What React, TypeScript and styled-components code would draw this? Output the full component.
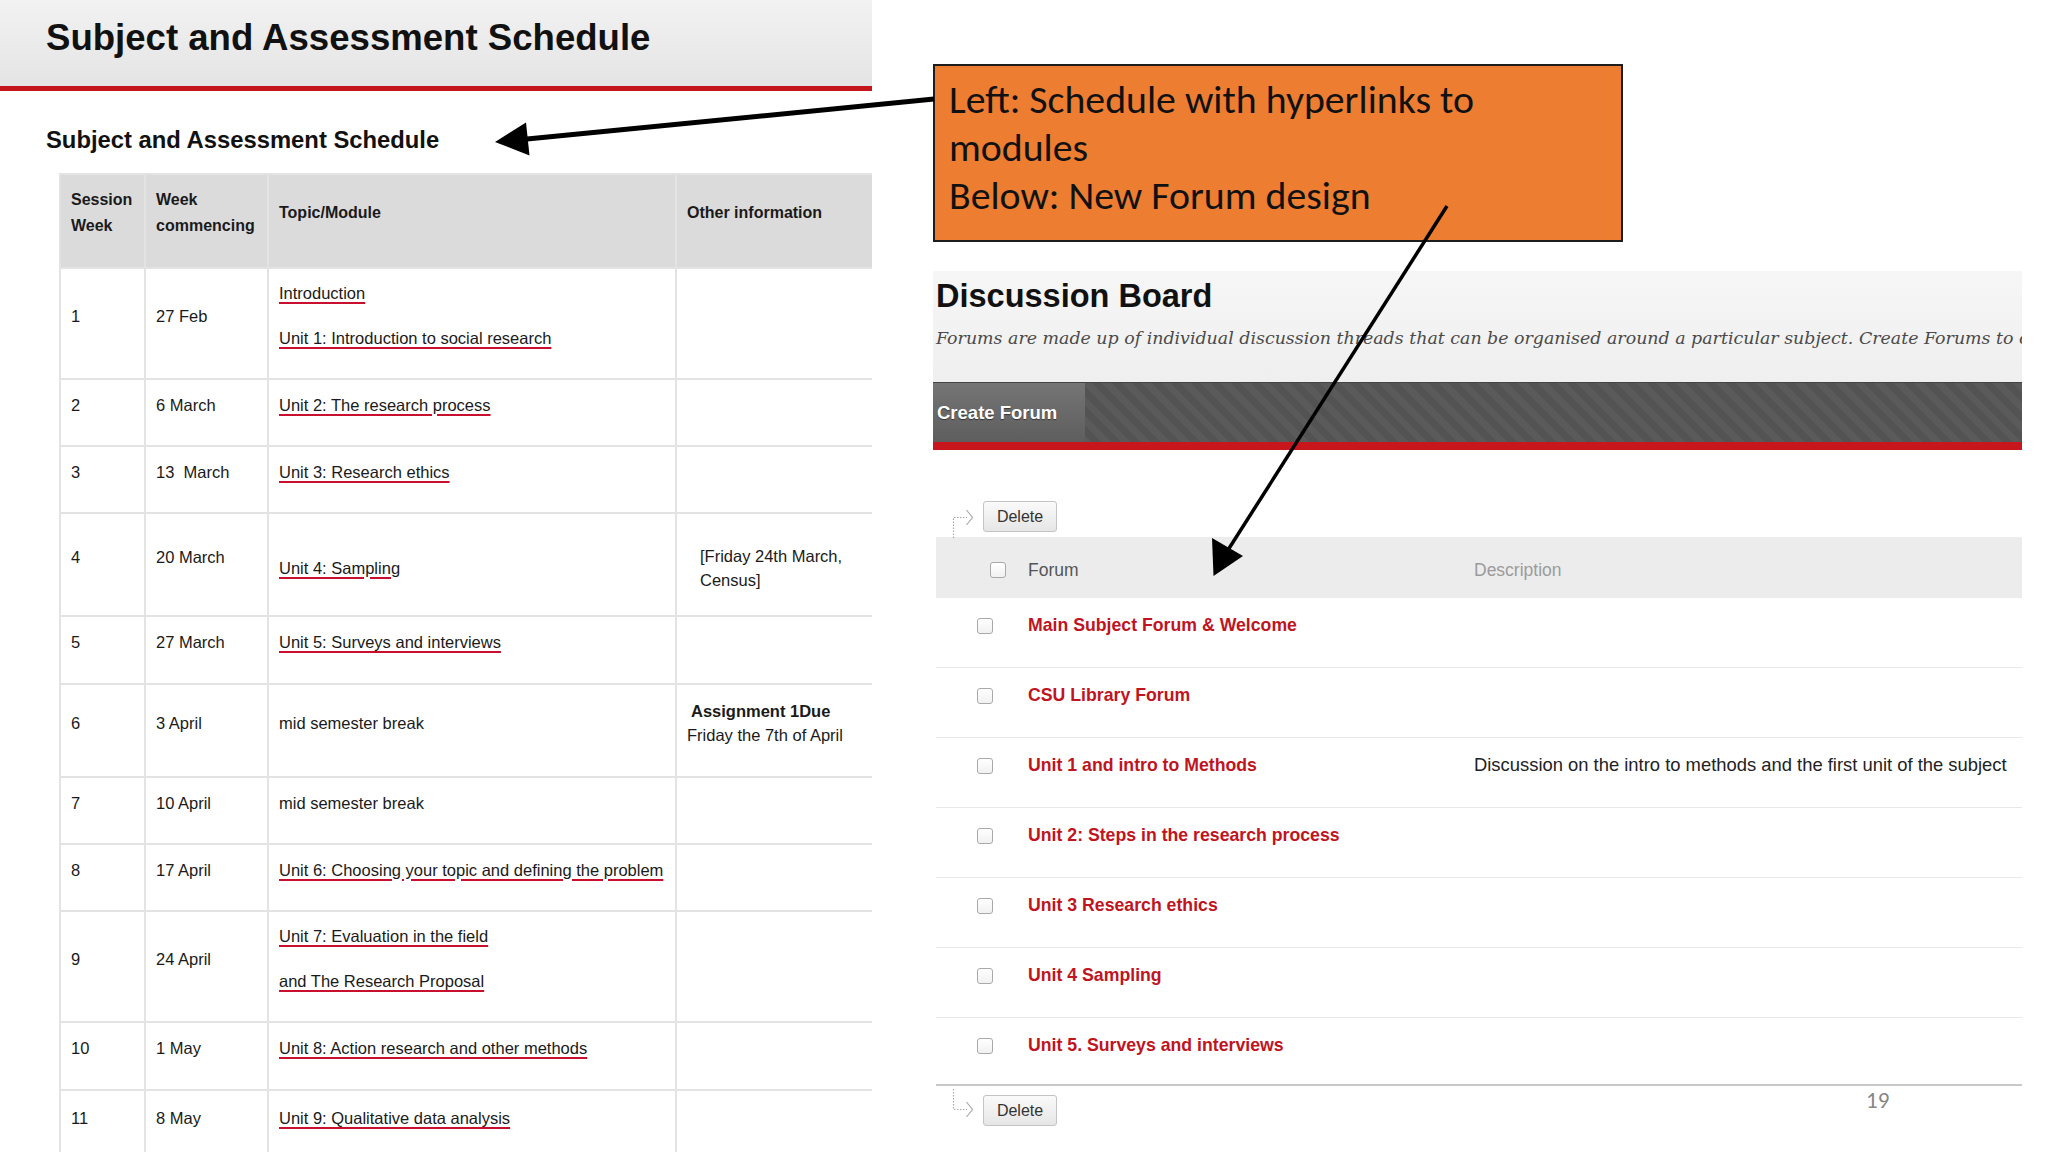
import React from 'react';
import styled, { createGlobalStyle } from 'styled-components';

const GlobalStyle = createGlobalStyle`
  html, body { margin: 0; padding: 0; background: #fff; }
  body { font-family: "Liberation Sans", Arial, sans-serif; color: #1a1a1a; }
  * { box-sizing: border-box; }
`;

const Page = styled.div`
  position: relative;
  width: 2048px;
  height: 1152px;
  overflow: hidden;
  background: #fff;
  display: flex;
  align-items: flex-start;
`;

/* ---------- Left: schedule ---------- */

const LeftPanel = styled.section`
  width: 872px;
  height: 1152px;
  flex-shrink: 0;
  overflow: hidden;
`;

const TitleBand = styled.header`
  height: 91px;
  padding: 17px 0 0 46px;
  background: linear-gradient(#f2f2f2, #e4e4e4);
  border-bottom: 5px solid #c4161c;
`;

const PageTitle = styled.h1`
  margin: 0;
  font-size: 36.6px;
  line-height: normal;
  font-weight: 700;
  color: #111;
`;

const SectionTitle = styled.h2`
  margin: 35px 0 0 46px;
  font-size: 23.8px;
  line-height: normal;
  font-weight: 700;
  color: #111;
`;

const ScheduleGrid = styled.div`
  display: grid;
  grid-template-columns: 83px 121px 406px 320px;
  grid-template-rows: 92px 109px 65px 65px 101px 66px 91px 65px 65px 109px 66px 70px;
  gap: 2px;
  padding: 2px;
  width: max-content;
  margin: 19px 0 0 59px;
  background: #e3e3e3;
`;

const Cell = styled.div<{ $head?: boolean; $mid?: boolean; $indent?: number }>`
  display: flex;
  flex-direction: column;
  justify-content: center;
  gap: 25px;
  padding: ${p => (p.$mid ? '6px' : '0')} 8px ${p => (p.$head ? '17px' : p.$mid ? '0' : '16px')}
    ${p => 10 + (p.$indent ?? 0)}px;
  background: ${p => (p.$head ? '#dcdbdc' : '#fff')};
  font-size: ${p => (p.$head ? '16px' : '16.5px')};
  font-weight: ${p => (p.$head ? 700 : 400)};
  line-height: ${p => (p.$head ? '26px' : '20px')};
  color: #1a1a1a;
  white-space: nowrap;
`;

const TopicLink = styled.a`
  color: #1a1a1a;
  text-decoration: underline;
  text-decoration-color: #c8102e;
  text-decoration-thickness: 2px;
  text-underline-offset: 3px;
  cursor: pointer;
`;

const Note = styled.div`
  line-height: 24px;
`;

const NoteStrong = styled.div<{ $indent?: number }>`
  font-weight: 700;
  padding-left: ${p => p.$indent ?? 0}px;
`;

/* ---------- Right: callout + discussion board ---------- */

const RightColumn = styled.section`
  margin-left: 61px;
  width: 1089px;
  padding-top: 64px;
  display: flex;
  flex-direction: column;
`;

const Callout = styled.div`
  width: 690px;
  height: 178px;
  padding: 10px 14px 0 14px;
  background: #ed7d31;
  border: 2px solid #1d1d1d;
  font-family: Carlito, Lato, "Open Sans", sans-serif;
  font-size: 39.8px;
  line-height: 48px;
  color: #111;
  white-space: nowrap;
`;

const Board = styled.div`
  margin-top: 29px;
  width: 1089px;
`;

const BoardHead = styled.div`
  height: 111px;
  padding: 6px 0 0 3px;
  background: linear-gradient(#f6f6f6, #efefef);
  overflow: hidden;
`;

const BoardTitle = styled.h2`
  margin: 0;
  font-size: 32.5px;
  line-height: 38px;
  font-weight: 700;
  color: #111;
`;

const BoardIntro = styled.p`
  margin: 11px 0 0;
  font-family: "DejaVu Serif", Georgia, serif;
  font-style: italic;
  font-size: 17.4px;
  line-height: 24px;
  color: #4a4a4a;
  white-space: nowrap;
`;

const Toolbar = styled.div`
  height: 68px;
  display: flex;
  background: repeating-linear-gradient(45deg, #535353 0 7px, #5a5a5a 7px 14px);
  border-top: 1px solid #444;
  border-bottom: 8px solid #c8161d;
`;

const CreateButton = styled.button`
  width: 152px;
  height: 100%;
  padding: 0 0 0 4px;
  border: none;
  background: linear-gradient(#757575, #5e5e5e);
  color: #fff;
  font-family: "Liberation Sans", Arial, sans-serif;
  font-size: 18.5px;
  font-weight: 700;
  text-align: left;
  text-shadow: 0 1px 1px rgba(0, 0, 0, 0.5);
  cursor: pointer;
`;

const ListArea = styled.div`
  padding-left: 3px;
`;

const ActionBar = styled.div<{ $top?: boolean }>`
  display: flex;
  align-items: flex-start;
  gap: 9px;
  height: ${p => (p.$top ? '36px' : '40px')};
  margin-top: ${p => (p.$top ? '51px' : '2px')};
  padding-left: 14px;
`;

const SelectArrow = styled.svg<{ $offset: number }>`
  width: 24px;
  height: 32px;
  margin-top: ${p => p.$offset}px;
  flex-shrink: 0;
`;

const DeleteButton = styled.button<{ $offset: number }>`
  margin-top: ${p => p.$offset}px;
  width: 74px;
  height: 31px;
  padding: 0;
  border: 1px solid #c4c4c4;
  border-radius: 3px;
  background: linear-gradient(#fafafa, #e6e6e6);
  color: #333;
  font-family: "Liberation Sans", Arial, sans-serif;
  font-size: 16px;
  cursor: pointer;
`;

const ForumRow = styled.div<{ $head?: boolean; $last?: boolean }>`
  display: grid;
  grid-template-columns: 92px 446px 1fr;
  align-items: ${p => (p.$head ? 'center' : 'start')};
  height: ${p => (p.$head ? '61px' : p.$last ? '66px' : '70px')};
  padding-top: ${p => (p.$head ? '5px' : '16px')};
  background: ${p => (p.$head ? '#ececec' : '#fff')};
  border-bottom: ${p => (p.$head || p.$last ? 'none' : '1px solid #e8e8e8')};
  font-size: 18.4px;
  line-height: 22px;
`;

const CheckCell = styled.div<{ $head?: boolean }>`
  padding-left: ${p => (p.$head ? '54px' : '41px')};
  padding-top: ${p => (p.$head ? '0' : '4px')};
  display: flex;
`;

const CheckBox = styled.span`
  display: block;
  width: 16px;
  height: 16px;
  border: 1px solid #a9a9a9;
  border-radius: 3px;
  background: linear-gradient(#ffffff, #f1f1f1);
`;

const HeadLabel = styled.span<{ $muted?: boolean }>`
  color: ${p => (p.$muted ? '#9b9b9b' : '#555')};
  font-size: 17.5px;
`;

const ForumName = styled.a`
  color: #c0141e;
  font-weight: 700;
  font-size: 17.7px;
  text-decoration: none;
  cursor: pointer;
  white-space: nowrap;
`;

const ForumDesc = styled.span`
  color: #222;
  white-space: nowrap;
`;

const BottomRule = styled.div`
  height: 2px;
  background: #c8c8c8;
`;

const SlideNumber = styled.div`
  position: absolute;
  left: 1866px;
  top: 1086px;
  font-family: Carlito, Lato, "Open Sans", sans-serif;
  font-size: 23px;
  line-height: 28px;
  color: #868686;
`;

const Overlay = styled.svg`
  position: absolute;
  left: 0;
  top: 0;
  width: 2048px;
  height: 1152px;
  pointer-events: none;
`;

/* ---------- Data ---------- */

type Row = {
  session: string;
  week: string;
  topics: { text: string; link: boolean }[];
  topicMid?: boolean;
  other?: React.ReactNode;
  otherMid?: boolean;
  otherIndent?: number;
};

const rows: Row[] = [
  {
    session: '1',
    week: '27 Feb',
    topics: [
      { text: 'Introduction', link: true },
      { text: 'Unit 1: Introduction to social research', link: true },
    ],
  },
  { session: '2', week: '6 March', topics: [{ text: 'Unit 2: The research process', link: true }] },
  { session: '3', week: '13\u00a0 March', topics: [{ text: 'Unit 3: Research ethics', link: true }] },
  {
    session: '4',
    week: '20 March',
    topics: [{ text: 'Unit 4: Sampling', link: true }],
    topicMid: true,
    other: (
      <Note>
        [Friday 24th March,
        <br />
        Census]
      </Note>
    ),
    otherMid: true,
    otherIndent: 13,
  },
  { session: '5', week: '27 March', topics: [{ text: 'Unit 5: Surveys and interviews', link: true }] },
  {
    session: '6',
    week: '3 April',
    topics: [{ text: 'mid semester break', link: false }],
    other: (
      <Note>
        <NoteStrong $indent={4}>Assignment 1Due</NoteStrong>
        Friday the 7th of April
      </Note>
    ),
  },
  { session: '7', week: '10 April', topics: [{ text: 'mid semester break', link: false }] },
  {
    session: '8',
    week: '17 April',
    topics: [{ text: 'Unit 6: Choosing your topic and defining the problem', link: true }],
  },
  {
    session: '9',
    week: '24 April',
    topics: [
      { text: 'Unit 7: Evaluation in the field', link: true },
      { text: 'and The Research Proposal', link: true },
    ],
  },
  { session: '10', week: '1 May', topics: [{ text: 'Unit 8: Action research and other methods', link: true }] },
  { session: '11', week: '8 May', topics: [{ text: 'Unit 9: Qualitative data analysis', link: true }] },
];

const forums = [
  { name: 'Main Subject Forum & Welcome', desc: '' },
  { name: 'CSU Library Forum', desc: '' },
  { name: 'Unit 1 and intro to Methods', desc: 'Discussion on the intro to methods and the first unit of the subject' },
  { name: 'Unit 2: Steps in the research process', desc: '' },
  { name: 'Unit 3 Research ethics', desc: '' },
  { name: 'Unit 4 Sampling', desc: '' },
  { name: 'Unit 5. Surveys and interviews', desc: '' },
];

const TopArrow = () => (
  <SelectArrow $offset={5} viewBox="0 0 24 32">
    <path d="M3.5 32 V11.5 H17" fill="none" stroke="#a8a8a8" strokeWidth="1.2" strokeDasharray="1.5 1.5" />
    <path d="M16.5 4 L22.5 11.5 L16.5 19" fill="none" stroke="#a8a8a8" strokeWidth="1.2" />
  </SelectArrow>
);

const BottomArrow = () => (
  <SelectArrow $offset={0} viewBox="0 0 24 32">
    <path d="M3.5 1 V21.5 H17" fill="none" stroke="#a8a8a8" strokeWidth="1.2" strokeDasharray="1.5 1.5" />
    <path d="M16.5 14 L22.5 21.5 L16.5 29" fill="none" stroke="#a8a8a8" strokeWidth="1.2" />
  </SelectArrow>
);

export default function App() {
  return (
    <>
      <GlobalStyle />
      <Page>
        <LeftPanel>
          <TitleBand>
            <PageTitle>Subject and Assessment Schedule</PageTitle>
          </TitleBand>
          <SectionTitle>Subject and Assessment Schedule</SectionTitle>
          <ScheduleGrid>
            <Cell $head>
              <div>
                Session
                <br />
                Week
              </div>
            </Cell>
            <Cell $head>
              <div>
                Week
                <br />
                commencing
              </div>
            </Cell>
            <Cell $head>Topic/Module</Cell>
            <Cell $head>Other information</Cell>
            {rows.map(r => (
              <React.Fragment key={r.session}>
                <Cell>{r.session}</Cell>
                <Cell>{r.week}</Cell>
                <Cell $mid={r.topicMid}>
                  {r.topics.map(t =>
                    t.link ? (
                      <div key={t.text}>
                        <TopicLink>{t.text}</TopicLink>
                      </div>
                    ) : (
                      <div key={t.text}>{t.text}</div>
                    )
                  )}
                </Cell>
                <Cell $mid={r.otherMid} $indent={r.otherIndent}>
                  {r.other}
                </Cell>
              </React.Fragment>
            ))}
          </ScheduleGrid>
        </LeftPanel>

        <RightColumn>
          <Callout>
            Left: Schedule with hyperlinks to
            <br />
            modules
            <br />
            Below: New Forum design
          </Callout>

          <Board>
            <BoardHead>
              <BoardTitle>Discussion Board</BoardTitle>
              <BoardIntro>
                Forums are made up of individual discussion threads that can be organised around a particular
                subject. Create Forums to organise discussions.
              </BoardIntro>
            </BoardHead>
            <Toolbar>
              <CreateButton>Create Forum</CreateButton>
            </Toolbar>

            <ListArea>
              <ActionBar $top>
                <TopArrow />
                <DeleteButton $offset={0}>Delete</DeleteButton>
              </ActionBar>
              <ForumRow $head>
                <CheckCell $head>
                  <CheckBox />
                </CheckCell>
                <HeadLabel>Forum</HeadLabel>
                <HeadLabel $muted>Description</HeadLabel>
              </ForumRow>
              {forums.map((f, i) => (
                <ForumRow key={f.name} $last={i === forums.length - 1}>
                  <CheckCell>
                    <CheckBox />
                  </CheckCell>
                  <ForumName>{f.name}</ForumName>
                  <ForumDesc>{f.desc}</ForumDesc>
                </ForumRow>
              ))}
              <BottomRule />
              <ActionBar>
                <BottomArrow />
                <DeleteButton $offset={7}>Delete</DeleteButton>
              </ActionBar>
            </ListArea>
          </Board>
        </RightColumn>

        <SlideNumber>19</SlideNumber>

        <Overlay viewBox="0 0 2048 1152">
          <line x1="934" y1="99" x2="522" y2="139.5" stroke="#000" strokeWidth="5" />
          <polygon points="495,142 526,122.5 529.5,155.5" fill="#000" />
          <line x1="1447" y1="206" x2="1228" y2="550" stroke="#000" strokeWidth="3.5" />
          <polygon points="1213.5,576 1212,538 1243,556" fill="#000" />
        </Overlay>
      </Page>
    </>
  );
}
